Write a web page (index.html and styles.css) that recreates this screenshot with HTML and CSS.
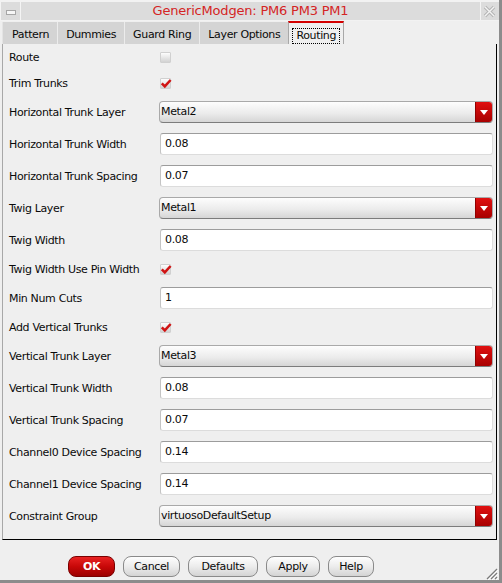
FILE: index.html
```html
<!DOCTYPE html>
<html>
<head>
<meta charset="utf-8">
<link rel="stylesheet" href="styles.css">
</head>
<body>
<div class="window">
  <div class="titlebar">
    <div class="tb-btn tb-min"><span class="min-bar"></span></div>
    <div class="title">GenericModgen: PM6 PM3 PM1</div>
    <div class="tb-btn tb-close">
      <svg width="13" height="13" viewBox="0 0 13 13"><path d="M2 2 L11 11 M11 2 L2 11" stroke="#b4b4b4" stroke-width="3.4" fill="none"/><path d="M2 2 L11 11 M11 2 L2 11" stroke="#f4f4f4" stroke-width="1.4" fill="none"/></svg>
    </div>
  </div>
  <div class="tabbar">
    <div class="tab tab-first">Pattern</div>
    <div class="tab">Dummies</div>
    <div class="tab">Guard Ring</div>
    <div class="tab">Layer Options</div>
    <div class="tab tab-active"><span class="focus">Routing</span></div>
  </div>
  <div class="panel">
    <div class="row row-check"><span class="label">Route</span><span class="check"></span></div>
    <div class="row row-check"><span class="label">Trim Trunks</span><span class="check"><svg class="tick" width="12" height="11" viewBox="0 0 12 11"><path d="M1.8 5.4 L4.8 8.4 L10.6 2" stroke="#d01414" stroke-width="2.6" fill="none"/></svg></span></div>
    <div class="row"><span class="label">Horizontal Trunk Layer</span><div class="select"><span class="select-text">Metal2</span><span class="arrow"><svg width="8" height="5" viewBox="0 0 8 5"><path d="M0 0 H8 L4 5 Z" fill="#fff"/></svg></span></div></div>
    <div class="row"><span class="label">Horizontal Trunk Width</span><div class="field">0.08</div></div>
    <div class="row"><span class="label">Horizontal Trunk Spacing</span><div class="field">0.07</div></div>
    <div class="row"><span class="label">Twig Layer</span><div class="select"><span class="select-text">Metal1</span><span class="arrow"><svg width="8" height="5" viewBox="0 0 8 5"><path d="M0 0 H8 L4 5 Z" fill="#fff"/></svg></span></div></div>
    <div class="row"><span class="label">Twig Width</span><div class="field">0.08</div></div>
    <div class="row row-check"><span class="label">Twig Width Use Pin Width</span><span class="check"><svg class="tick" width="12" height="11" viewBox="0 0 12 11"><path d="M1.8 5.4 L4.8 8.4 L10.6 2" stroke="#d01414" stroke-width="2.6" fill="none"/></svg></span></div>
    <div class="row"><span class="label">Min Num Cuts</span><div class="field">1</div></div>
    <div class="row row-check"><span class="label">Add Vertical Trunks</span><span class="check"><svg class="tick" width="12" height="11" viewBox="0 0 12 11"><path d="M1.8 5.4 L4.8 8.4 L10.6 2" stroke="#d01414" stroke-width="2.6" fill="none"/></svg></span></div>
    <div class="row"><span class="label">Vertical Trunk Layer</span><div class="select"><span class="select-text">Metal3</span><span class="arrow"><svg width="8" height="5" viewBox="0 0 8 5"><path d="M0 0 H8 L4 5 Z" fill="#fff"/></svg></span></div></div>
    <div class="row"><span class="label">Vertical Trunk Width</span><div class="field">0.08</div></div>
    <div class="row"><span class="label">Vertical Trunk Spacing</span><div class="field">0.07</div></div>
    <div class="row"><span class="label">Channel0 Device Spacing</span><div class="field">0.14</div></div>
    <div class="row"><span class="label">Channel1 Device Spacing</span><div class="field">0.14</div></div>
    <div class="row"><span class="label">Constraint Group</span><div class="select"><span class="select-text">virtuosoDefaultSetup</span><span class="arrow"><svg width="8" height="5" viewBox="0 0 8 5"><path d="M0 0 H8 L4 5 Z" fill="#fff"/></svg></span></div></div>
  </div>
  <div class="footer">
    <div class="btn btn-ok">OK</div>
    <div class="btn btn-cancel">Cancel</div>
    <div class="btn btn-defaults">Defaults</div>
    <div class="btn btn-apply">Apply</div>
    <div class="btn btn-help">Help</div>
  </div>
  <svg class="grip" width="12" height="12" viewBox="0 0 12 12">
    <path d="M11 1 L1 11 M11 5 L5 11 M11 9 L9 11" stroke="#7a7a7a" stroke-width="1.2" fill="none"/>
    <path d="M12 2 L2 12 M12 6 L6 12 M12 10 L10 12" stroke="#ffffff" stroke-width="1" fill="none"/>
  </svg>
</div>
</body>
</html>
```

FILE: styles.css
```css
html, body {
  margin: 0;
  padding: 0;
  background: #efefef;
}

body {
  font-family: "DejaVu Sans", "Noto Sans", sans-serif;
  font-size: 11px;
  letter-spacing: -0.35px;
  color: #0a0a0a;
}

.window {
  position: relative;
  width: 502px;
  height: 583px;
  box-sizing: border-box;
  border-right: 3px solid #8c8c8c;
  border-bottom: 3px solid #8c8c8c;
  background: #efefef;
  display: flex;
  flex-direction: column;
  overflow: hidden;
}

/* title bar */
.titlebar {
  height: 21px;
  box-sizing: border-box;
  border-top: 2px solid #f2f2f2;
  border-bottom: 1px solid #f2f2f2;
  background: #dcdcdc;
  display: flex;
  flex-shrink: 0;
}

.tb-btn {
  box-sizing: border-box;
  height: 18px;
  display: flex;
  align-items: center;
  justify-content: center;
  background: #dcdcdc;
}

.tb-min {
  width: 21px;
  border-left: 1px solid #f4f4f4;
  border-right: 1px solid #f4f4f4;
}

.min-bar {
  width: 8px;
  height: 3px;
  background: #f6f6f6;
  border: 1px solid #a6a6a6;
  margin-top: 3px;
}

.tb-close {
  width: 18px;
  border-left: 1px solid #f4f4f4;
  margin-right: 1px;
}

.title {
  flex: 1;
  text-align: center;
  color: #d42424;
  font-size: 13px;
  letter-spacing: -0.2px;
  line-height: 18px;
}

/* tabs */
.tabbar {
  height: 23px;
  display: flex;
  align-items: flex-end;
  padding-left: 2px;
  flex-shrink: 0;
}

.tab {
  height: 22px;
  box-sizing: border-box;
  padding: 4px 8px 0 8px;
  line-height: 18px;
  background: #d4d4d4;
  border-left: 1px solid #ececec;
  white-space: nowrap;
}

.tab-first {
  padding-left: 9px;
  border-left: 1px solid #e4e4e4;
}

.tab-active {
  height: 23px;
  padding: 4px 3px 0 3px;
  background: #efefef;
  border-top: 2px solid #d40000;
  border-left: 1px solid #a8a8a8;
  border-right: 1px solid #a8a8a8;
}

.focus {
  display: inline-block;
  border: 1px dotted #000;
  padding: 0 3px;
  line-height: 14px;
}

/* panel */
.panel {
  margin: 0 2px 0 2px;
  border-left: 1px solid #a8a8a8;
  border-right: 1px solid #000;
  border-bottom: 1px solid #000;
  padding: 0 3px 7px 6px;
  display: flex;
  flex-direction: column;
  flex-shrink: 0;
}

.row {
  height: 32px;
  display: flex;
  align-items: center;
}

.row-check {
  height: 26px;
}

.label {
  width: 150px;
  flex-shrink: 0;
  white-space: nowrap;
}

.check {
  position: relative;
  width: 11px;
  height: 11px;
  margin-left: 1px;
  box-sizing: border-box;
  border: 1px solid #d0d0d0;
  border-radius: 1px;
  background: linear-gradient(#fdfdfd, #d2d2d2);
}

.tick {
  position: absolute;
  left: -1px;
  top: -1px;
}

.select {
  flex: 1;
  height: 22px;
  box-sizing: border-box;
  border: 1px solid #a9a9a9;
  border-bottom-color: #7c7c7c;
  border-radius: 4px;
  background: linear-gradient(#fdfdfd 0%, #ececec 55%, #d6d6d6 100%);
  display: flex;
  align-items: center;
  overflow: hidden;
}

.select-text {
  flex: 1;
  padding-left: 1px;
  line-height: 20px;
}

.arrow {
  width: 16px;
  align-self: stretch;
  background: linear-gradient(#e01010, #a80000);
  border-left: 1px solid #900000;
  display: flex;
  align-items: center;
  justify-content: center;
}

.field {
  flex: 1;
  height: 22px;
  margin-left: 1px;
  box-sizing: border-box;
  background: #fff;
  border: 1px solid #dcdcdc;
  border-top-color: #9c9c9c;
  border-left-color: #c4c4c4;
  border-radius: 3px;
  padding-left: 4px;
  line-height: 20px;
}

/* footer */
.footer {
  height: 40px;
  box-sizing: border-box;
  padding: 16px 0 0 68px;
  display: flex;
  align-items: flex-start;
  gap: 8px;
}

.btn {
  height: 21px;
  box-sizing: border-box;
  border: 1px solid #8a8a8a;
  border-radius: 8px;
  background: linear-gradient(#fefefe 0%, #ececec 50%, #d4d4d4 100%);
  text-align: center;
  line-height: 19px;
}

.btn-ok {
  width: 47px;
  background: linear-gradient(#e82222 0%, #c80808 50%, #9c0000 100%);
  border-color: #7a0000;
  color: #fff;
  font-weight: bold;
}

.btn-cancel { width: 57px; }
.btn-defaults { width: 70px; }
.btn-apply { width: 54px; }
.btn-help { width: 46px; }

.grip {
  position: absolute;
  right: 1px;
  bottom: 0;
}
```
